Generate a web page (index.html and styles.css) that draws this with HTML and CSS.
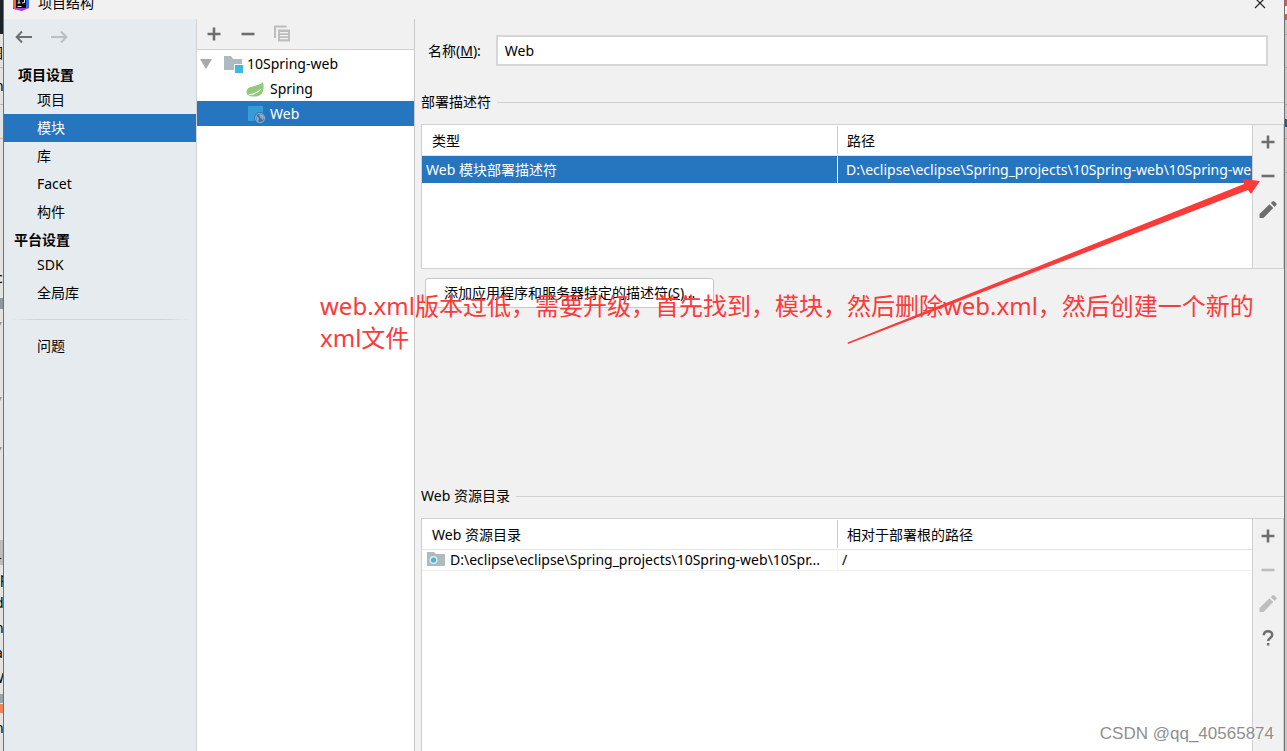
FILE: index.html
```html
<!DOCTYPE html>
<html lang="zh-CN">
<head>
<meta charset="utf-8">
<title>项目结构</title>
<link rel="stylesheet" href="styles.css">
</head>
<body>
<svg class="symbols" aria-hidden="true">
  <symbol id="plus" viewBox="0 0 20 20"><path d="M10 3.500v13M3.500 10h13" stroke="currentColor" stroke-width="2.600" fill="none"/></symbol>
  <symbol id="minus" viewBox="0 0 20 20"><path d="M3.500 10h13" stroke="currentColor" stroke-width="2.600" fill="none"/></symbol>
  <symbol id="pencil" viewBox="0 0 20 20"><path d="M1.500 18V14L11.500 4.300 15.300 8 5.500 18zM12.800 3.100l1.600-1.600q1-.8 2 0l1.800 1.800q.9 1 0 2l-1.600 1.600z" fill="currentColor"/></symbol>
  <symbol id="help" viewBox="0 0 20 20"><path d="M5.800 7.200C5.800 4.600 7.600 3.300 10 3.300s4.200 1.300 4.200 3.600c0 3-4 3.200-4 6.100" stroke="currentColor" stroke-width="2.500" fill="none"/><path d="M8.900 15h2.500v2.500H8.900z" fill="currentColor"/></symbol>
  <symbol id="copy" viewBox="0 0 20 20"><path d="M3 14V2.500h11.500" fill="none" stroke="currentColor" stroke-width="2"/><path fill-rule="evenodd" d="M6 5.500h12v12H6zM8 8v1.200h8V8zM8 11v1.200h8V11zM8 14v1.200h8V14z" fill="currentColor"/></symbol>
</svg>
<div class="desktop">
  <svg class="edge edge-left" aria-hidden="true">
    <rect width="3" height="34" fill="#1b2227"/>
    <path d="M0 67.500h3M0 104.500h3M0 138.500h3" stroke="#b9b9b7"/>
    <text x="-11" y="58">图</text><text x="-5" y="91">n</text><text x="-4" y="283">c</text>
    <rect y="298" width="3" height="11" fill="#8e989c"/>
    <path d="M0 322h2L0 326zM0 397h2L0 401zM0 447h2L0 451z" fill="#999"/>
    <rect y="540" width="3" height="25" fill="#bcbcba"/>
    <text x="-5" y="557">_</text><text x="0" y="583">p</text><text x="-5" y="608">d</text><text x="-5" y="633">n</text><text x="-5" y="658">a</text><text x="-9" y="683">W</text>
    <rect y="694" width="3" height="9" fill="#9aa4a8"/><rect y="704" width="3" height="9" fill="#ee8258"/>
    <text x="-5" y="733">n</text>
  </svg>
  <div class="dialog">
    <header class="titlebar">
      <svg class="app-icon" viewBox="0 0 16 16" aria-hidden="true"><path d="M0 3 8 0l8 3v10l-7 3-9-2z" fill="#a43bea"/><path d="M0 2l7 3-4 10-3-3z" fill="#fd5b2c"/><path d="M10 1l6 4v6l-5 1z" fill="#2b6df0"/><path d="M3 2h10v11H3z" fill="#080808"/><path d="M4.500 4h3M6 4v4M4.500 8h3M9 4h2.500v3.500L9 8M4.500 11.500h4" stroke="#eee" fill="none"/></svg>
      <h1>项目结构</h1>
      <button class="close" aria-label="关闭"><svg viewBox="0 0 12 12"><path d="M1 1l10 10M11 1 1 11" stroke="#222" stroke-width="1.200"/></svg></button>
    </header>
    <div class="columns">
      <nav class="sidebar">
        <div class="history">
          <button aria-label="后退"><svg viewBox="0 0 18 14"><path d="M17 7H2M7 1.500 1.700 7 7 12.500" /></svg></button>
          <button aria-label="前进" disabled><svg viewBox="0 0 18 14"><path d="M1 7h15M11 1.500 16.300 7 11 12.500"/></svg></button>
        </div>
        <h2>项目设置</h2>
        <button class="nav-item">项目</button>
        <button class="nav-item selected">模块</button>
        <button class="nav-item">库</button>
        <button class="nav-item">Facet</button>
        <button class="nav-item">构件</button>
        <h2 class="platform">平台设置</h2>
        <button class="nav-item">SDK</button>
        <button class="nav-item">全局库</button>
        <hr>
        <button class="nav-item">问题</button>
      </nav>
      <section class="modules">
        <div class="tree-tools">
          <button class="tool" aria-label="添加"><svg><use href="#plus"/></svg></button>
          <button class="tool" aria-label="移除"><svg><use href="#minus"/></svg></button>
          <button class="tool" aria-label="复制" disabled><svg><use href="#copy"/></svg></button>
        </div>
        <button class="node root">
          <svg class="chevron" viewBox="0 0 12 10"><path d="M0 0h12L6 10z" fill="#a9a9a9"/></svg>
          <svg class="node-icon" viewBox="0 0 20 18"><path d="M1 1h7l2 3h9v11H1z" fill="#afb9c0"/><path d="M11 9h9v9h-9z" fill="#fff"/><path d="M12 10h8v8h-8z" fill="#40b6e0"/></svg>
          10Spring-web
        </button>
        <button class="node child">
          <svg class="node-icon" viewBox="0 0 20 18"><path d="M17 2C18.200 7 18.500 16 9.500 16.500 3.500 17 .5 15 .5 12 .5 5 12.500 7 17 2z" fill="#93c97a"/><path d="M3 14.800Q11 14 15 9" stroke="#fff" stroke-width="1.100" fill="none"/></svg>
          Spring
        </button>
        <button class="node child selected">
          <svg class="node-icon" viewBox="0 0 20 18"><path d="M2 1h15v15H2z" fill="#359dd3"/><circle cx="14" cy="13" r="6" fill="#2675bf"/><circle cx="14" cy="13" r="4.500" fill="none" stroke="#9caab5" stroke-width="1.200"/><path d="M10 10.500l3 2.500-.5 2.500 1 1.500-2.500-1.500zM13.500 9l3.500 1 1 3-2 2.500-.5-2.500-2-1z" fill="#9caab5"/></svg>
          Web
        </button>
      </section>
      <main class="editor">
        <div class="name-row">
          <label for="name">名称(<u>M</u>):</label>
          <input id="name" type="text" value="Web">
        </div>
        <section class="descriptors">
          <h3>部署描述符</h3>
          <div class="panel">
            <div class="table-area">
              <table>
                <thead><tr><th>类型</th><th>路径</th></tr></thead>
                <tbody><tr class="selected"><td>Web 模块部署描述符</td><td>D:\eclipse\eclipse\Spring_projects\10Spring-web\10Spring-web</td></tr></tbody>
              </table>
            </div>
            <div class="side-tools">
              <button class="tool" aria-label="添加"><svg><use href="#plus"/></svg></button>
              <button class="tool" aria-label="移除"><svg><use href="#minus"/></svg></button>
              <button class="tool" aria-label="编辑"><svg><use href="#pencil"/></svg></button>
            </div>
          </div>
          <button class="add-descriptor">添加应用程序和服务器特定的描述符(<u>S</u>)...</button>
        </section>
        <section class="resources">
          <h3>Web 资源目录</h3>
          <div class="panel">
            <div class="table-area">
              <table>
                <thead><tr><th>Web 资源目录</th><th>相对于部署根的路径</th></tr></thead>
                <tbody><tr><td><svg class="folder" viewBox="0 0 18 14" aria-hidden="true"><path d="M0 0h7l2 2h9v12H0z" fill="#afb9c0"/><circle cx="6.500" cy="8" r="4" fill="#dfe9ee"/><circle cx="6.500" cy="8" r="2.600" fill="#40b6e0"/></svg>D:\eclipse\eclipse\Spring_projects\10Spring-web\10Spr...</td><td>/</td></tr></tbody>
              </table>
            </div>
            <div class="side-tools">
              <button class="tool" aria-label="添加"><svg><use href="#plus"/></svg></button>
              <button class="tool" aria-label="移除" disabled><svg><use href="#minus"/></svg></button>
              <button class="tool" aria-label="编辑" disabled><svg><use href="#pencil"/></svg></button>
              <button class="tool" aria-label="帮助"><svg><use href="#help"/></svg></button>
            </div>
          </div>
        </section>
      </main>
    </div>
  </div>
  <svg class="edge edge-right" aria-hidden="true">
    <rect width="2" height="20" fill="#e8573a"/><rect y="6" width="2" height="8" fill="#eee"/>
    <path d="M0 34.500h2M0 67.500h2M0 104.500h2M0 138.500h2M0 172.500h2" stroke="#aaa"/>
    <rect y="119" width="2" height="8" fill="#1a5d9c"/>
  </svg>
</div>
<svg class="arrow" viewBox="840 170 430 180" aria-hidden="true"><path d="M847.500 342.500 1244 184 1242 179 1260 181 1251 194 1248 190 848 344z" fill="#fb3a3a"/></svg>
<p class="annotation">web.xml版本过低，需要升级，首先找到，模块，然后删除web.xml，然后创建一个新的<br>xml文件</p>
<p class="watermark">CSDN @qq_40565874</p>
</body>
</html>
```
FILE: styles.css
```css
* { box-sizing: border-box; }
body {
  margin: 0;
  position: relative;
  overflow: hidden;
  color: #000;
  font: 14px/20px "Noto Sans", "Noto Sans CJK SC", sans-serif;
}
button, input { font: inherit; color: inherit; }
button { border: 0; padding: 0; background: none; text-align: left; }
h1, h2, h3, p { margin: 0; font-size: 14px; font-weight: 400; }
svg { display: block; }
.symbols { display: none; }
.desktop { display: grid; grid-template-columns: 3px minmax(0, 1fr) 2px; height: 100vh; background: #e3e3e1; }
.edge { width: 100%; height: 100%; overflow: hidden; }
.edge-right { background: #c9c9c9; }
.dialog {
  display: flex;
  flex-direction: column;
  min-height: 0;
  overflow: hidden;
  border: solid #707070;
  border-width: 0 1px;
  background: #f1f1f1;
}
.titlebar { display: flex; align-items: center; gap: 9px; height: 32px; margin-top: -13px; padding: 0 18px 0 9px; flex: none; }
.app-icon { width: 16px; height: 16px; }
.close { margin-left: auto; }
.close svg { width: 12px; height: 12px; }
.columns { display: grid; grid-template-columns: 193px 218px minmax(0, 1fr); flex: 1; min-height: 0; }

.sidebar { background: #e6ebef; border-right: 1px solid #d1d3d5; }
.history { display: flex; gap: 17px; padding: 11px 11px 0; height: 45px; }
.history svg { width: 18px; height: 14px; fill: none; stroke: #6e6e6e; stroke-width: 2; }
.history button { height: 14px; }
.history button:disabled svg { stroke: #bdbdbd; }
.sidebar h2 { padding-left: 14px; line-height: 22px; font-weight: 700; }
.sidebar .platform { margin-top: 3px; padding-left: 10px; }
.nav-item { display: block; width: 100%; height: 28px; padding-left: 33px; }
.selected { background: #2675bf; color: #fff; }
.sidebar hr {
  height: 1px;
  margin: 12px 6px;
  border: 0;
  background: linear-gradient(90deg, transparent, #d0d2d5 15%, #d0d2d5 85%, transparent);
}

.modules { background: #fff; border-right: 1px solid #c9c9c9; }
.tree-tools { display: flex; height: 31px; margin-bottom: 1px; background: #f1f1f1; border-bottom: 1px solid #d1d1d1; }
.tool { display: flex; align-items: center; justify-content: center; width: 34px; height: 30px; color: #6e6e6e; }
.tool svg { width: 20px; height: 20px; }
.tool:disabled { color: #bdbdbd; }
.node { display: flex; align-items: center; width: 100%; height: 25px; }
.root { padding-left: 3px; }
.child { padding-left: 49px; }
.chevron { width: 12px; height: 10px; margin-right: 11px; }
.node-icon { width: 20px; height: 18px; margin-right: 4px; }

.editor { display: flex; flex-direction: column; min-height: 0; padding: 16px 0 0 6px; }
.name-row { display: flex; align-items: center; gap: 15px; padding: 0 16px 0 7px; }
.name-row input { flex: 1; min-width: 0; height: 31px; padding: 0 7px; border: 2px solid #d6d6d6; background: #fff; }
h3 { display: flex; align-items: center; gap: 6px; margin-bottom: 12px; }
h3::after { content: ""; flex: 1; border-top: 1px solid #d0d0d0; }
.descriptors { min-height: 394px; margin-top: 26px; }
.resources { display: flex; flex: 1; flex-direction: column; min-height: 0; }
.panel { display: grid; grid-template-columns: minmax(0, 1fr) 31px; border: 1px solid #d0d0d0; }
.descriptors .panel { min-height: 145px; }
.resources .panel { flex: 1; border-bottom: 0; }
.table-area { overflow: hidden; background: #fff; }
table { width: 100%; table-layout: fixed; border-collapse: separate; border-spacing: 0; }
th { height: 31px; padding: 1px 10px 0; font-weight: 400; text-align: left; border-bottom: 1px solid #e3e3e3; }
th:first-child { width: calc(50% - 1px); }
th + th { background: linear-gradient(#ccc, #ccc) 0 1px / 1px 28px no-repeat; }
td { height: 27px; padding: 0 4px; overflow: hidden; white-space: nowrap; }
td + td { padding-left: 8px; border-left: 1px solid #fff; }
.resources td { height: 21px; padding-left: 5px; border-bottom: 1px solid #f1f1f1; }
.resources td + td { padding-left: 4px; border-left-color: #f1f1f1; }
.folder { display: inline-block; width: 18px; height: 14px; margin-right: 5px; vertical-align: -1px; }
.side-tools { border-left: 1px solid #d0d0d0; background: #f1f1f1; }
.side-tools .tool { width: 100%; height: 34px; }
.add-descriptor { height: 30px; margin: 9px 4px 0; padding: 0 18px; border: 1px solid #c8c8c8; border-radius: 3px; background: #fff; }

.arrow { position: absolute; left: 840px; top: 170px; width: 430px; height: 180px; }
.annotation { position: absolute; left: 320px; top: 290px; color: #fb3a3a; font-size: 24px; line-height: 32px; white-space: nowrap; }
.watermark {
  position: absolute;
  right: 13px;
  bottom: 7px;
  color: #8f8f8f;
  font: 17px/20px "Liberation Sans", sans-serif;
  text-shadow: 1px 1px #fff;
}
```
